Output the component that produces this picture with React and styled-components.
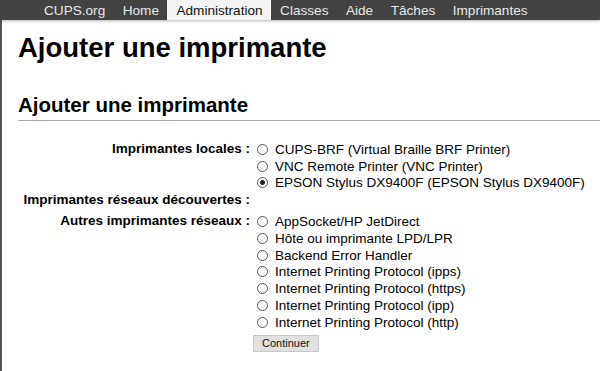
import React, { useState } from "react";
import styled, { createGlobalStyle } from "styled-components";

const Global = createGlobalStyle`
    html, body {
        margin: 0;
        padding: 0;
        background: #fff;
        font-family: "Liberation Sans", Arial, sans-serif;
        color: #000;
    }
`;

const NavBar = styled.ul`
    display: flex;
    list-style: none;
    margin: 0;
    padding: 0 0 0 35px;
    height: 20px;
    background: #434343;
    box-shadow: 0 1px 3px rgba(0, 0, 0, 0.3);
    position: relative;
    z-index: 1;
`;

const NavItem = styled.li`
    display: flex;
    align-items: center;
    height: 20px;
    padding: 0 8.5px 0 9px;
    font-size: 13.6px;
    color: ${(p) => (p.active ? "#111" : "#e8e8e8")};
    background: ${(p) => (p.active ? "#f4f4f4" : "transparent")};
    cursor: pointer;
`;

const Page = styled.div`
    border-left: 2px solid #555;
    padding: 0 0 0 16px;
    min-height: 351px;
    box-sizing: border-box;
`;

const Title = styled.h1`
    margin: 0;
    padding-top: 12px;
    font-size: 27.5px;
    line-height: 32px;
    font-weight: 700;
`;

const SubTitle = styled.h2`
    margin: 29px 0 0 0;
    padding-bottom: 3px;
    font-size: 20.5px;
    line-height: 24px;
    font-weight: 700;
    border-bottom: 1px solid #a8a8a8;
`;

const Form = styled.div`
    display: grid;
    grid-template-columns: 232px auto;
    column-gap: 5px;
    margin-top: 20px;
    font-size: 13.5px;
`;

const Label = styled.div`
    text-align: right;
    font-weight: 700;
    line-height: 16.8px;
    margin-top: ${(p) => p.gap || 0}px;
`;

const Choices = styled.div`
    display: flex;
    flex-direction: column;
    min-height: 16.8px;
    margin-top: ${(p) => p.gap || 0}px;
`;

const Choice = styled.label`
    display: flex;
    align-items: center;
    height: 16.8px;
    white-space: nowrap;
`;

const Radio = styled.span`
    width: 11px;
    height: 11px;
    box-sizing: border-box;
    border: 1px solid #555;
    border-radius: 50%;
    margin: 0 7px 0 2px;
    display: flex;
    align-items: center;
    justify-content: center;
    flex-shrink: 0;
    &::after {
        content: "";
        width: 5px;
        height: 5px;
        border-radius: 50%;
        background: ${(p) => (p.checked ? "#222" : "transparent")};
    }
`;

const Button = styled.button`
    margin: 4px 0 0 -2px;
    padding: 0 8px;
    height: 17px;
    font-family: "Liberation Sans", Arial, sans-serif;
    font-size: 11px;
    background: #e1e1e1;
    border: 1px solid #c8c8c8;
    border-radius: 0;
    color: #111;
    width: fit-content;
`;

const navItems = ["CUPS.org", "Home", "Administration", "Classes", "Aide", "Tâches", "Imprimantes"];

const locales = [
    "CUPS-BRF (Virtual Braille BRF Printer)",
    "VNC Remote Printer (VNC Printer)",
    "EPSON Stylus DX9400F (EPSON Stylus DX9400F)",
];

const autres = [
    "AppSocket/HP JetDirect",
    "Hôte ou imprimante LPD/LPR",
    "Backend Error Handler",
    "Internet Printing Protocol (ipps)",
    "Internet Printing Protocol (https)",
    "Internet Printing Protocol (ipp)",
    "Internet Printing Protocol (http)",
];

export default function App() {
    const [selected, setSelected] = useState(locales[2]);

    const renderChoices = (list) =>
        list.map((item) => (
            <Choice key={item} onClick={() => setSelected(item)}>
                <Radio checked={selected === item} />
                {item}
            </Choice>
        ));

    return (
        <>
            <Global />
            <NavBar>
                {navItems.map((item) => (
                    <NavItem key={item} active={item === "Administration"}>
                        {item}
                    </NavItem>
                ))}
            </NavBar>
            <Page>
                <Title>Ajouter une imprimante</Title>
                <SubTitle>Ajouter une imprimante</SubTitle>
                <Form>
                    <Label>Imprimantes locales :</Label>
                    <Choices>{renderChoices(locales)}</Choices>
                    <Label gap={1}>Imprimantes réseaux découvertes :</Label>
                    <Choices gap={1} />
                    <Label gap={4}>Autres imprimantes réseaux :</Label>
                    <Choices gap={4}>
                        {renderChoices(autres)}
                        <Button>Continuer</Button>
                    </Choices>
                </Form>
            </Page>
        </>
    );
}
